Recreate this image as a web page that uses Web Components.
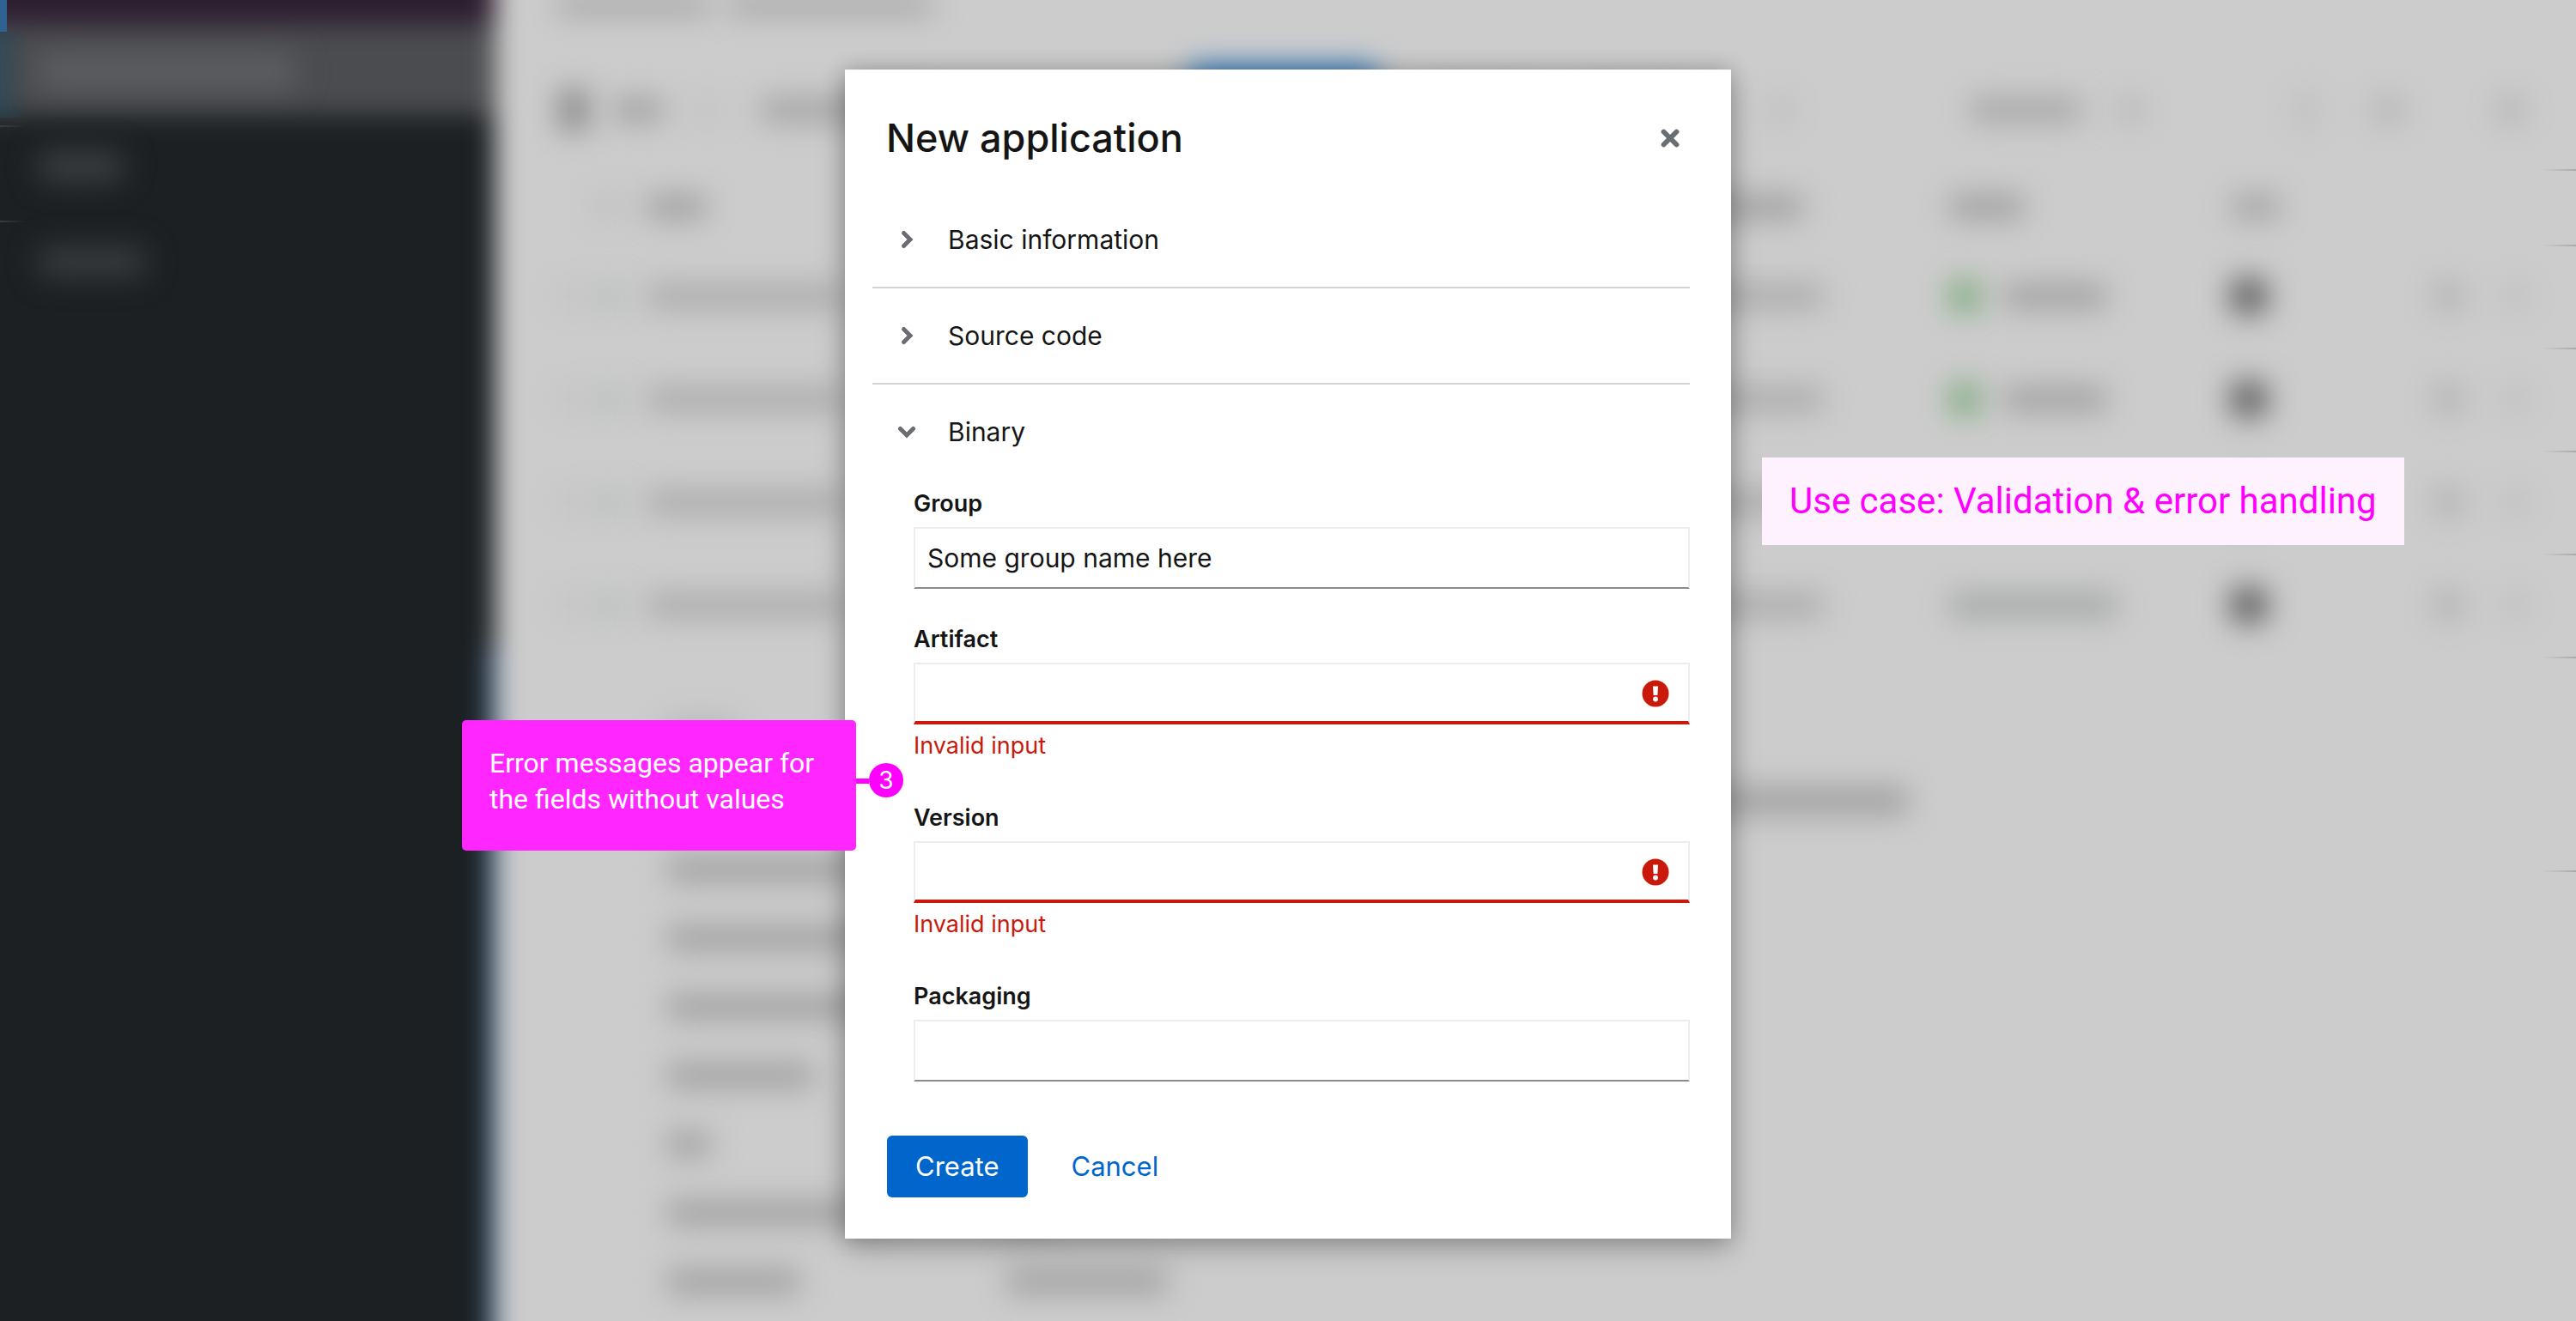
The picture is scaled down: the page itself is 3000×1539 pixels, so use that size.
<!DOCTYPE html>
<html lang="en">
<head>
<meta charset="utf-8">
<title>New application</title>
<style>
  html, body { margin: 0; min-height: 100%; }
  body { background: #ccc; color: #151515; font: 400 30px/48px Inter, "Liberation Sans", sans-serif; }
</style>
</head>
<body>
<app-stage>
  <app-backdrop slot="backdrop"></app-backdrop>
  <app-dialog heading="New application">
    <app-section label="Basic information"></app-section>
    <app-section label="Source code"></app-section>
    <app-section label="Binary" open>
      <app-field label="Group" value="Some group name here"></app-field>
      <app-field label="Artifact" error="Invalid input"></app-field>
      <app-field label="Version" error="Invalid input"></app-field>
      <app-field label="Packaging"></app-field>
    </app-section>
    <app-button slot="actions" variant="primary">Create</app-button>
    <app-button slot="actions" variant="link">Cancel</app-button>
    <app-callout slot="notes" number="3">Error messages appear for the fields without values</app-callout>
    <app-tag slot="notes">Use case: Validation &amp; error handling</app-tag>
  </app-dialog>
</app-stage>

<script>
const define = (name, render) => customElements.define(name, class extends HTMLElement {
  connectedCallback() {
    if (this.shadowRoot) return;
    this.attachShadow({ mode: 'open' }).innerHTML = render(this);
  }
});

define('app-stage', () => `
  <style>
    :host { display: grid; min-height: 100vh; overflow: hidden; }
    .layer { grid-area: 1 / 1; min-width: 0; }
    .back { height: 100vh; overflow: hidden; display: grid; }
    .front { display: flex; justify-content: center; align-items: flex-start; padding-top: 81px; z-index: 1; }
  </style>
  <div class="layer back"><slot name="backdrop"></slot></div>
  <div class="layer front"><slot></slot></div>`);

/* Out-of-focus page behind the dialog: w = width, c = colour, h = height of each shape */
const blob = (w, c = '#9f9f9f', h = 28) => `<i style="width:${w}px;height:${h}px;background:${c}"></i>`;
const row = (state, text) => `
  <div class="row">
    <span>${blob(16, '#bdbdbd')}${blob(30, '#b6baba')}</span><span>${blob(230, '#aaa')}</span><span>${blob(140, '#aaa')}</span>
    <span>${state}${text}</span><span>${blob(42, '#5c5c5c', 40)}</span>
    <span>${blob(32, '#b0b0b0', 34)}</span><span>${blob(20, '#bababa', 30)}</span>
  </div>`;
const okState = blob(36, '#7fab7f', 38), running = blob(122, '#a0a0a0');

define('app-backdrop', () => `
  <style>
    :host { display: flex; min-width: 0; overflow: hidden; background: #ccc; }
    i { display: block; flex: none; border-radius: 8px; filter: blur(17px); }
    nav { flex: none; width: 577px; display: grid; z-index: 1; }
    .tone, .items { grid-area: 1 / 1; }
    .tone { margin: -60px 0 -60px -60px; filter: blur(15px); background: #1c2023; display: flex; flex-direction: column; }
    .tone b { display: block; height: 88px; background: #2c1e30; }
    .tone u { display: block; height: 106px; background: #4b4c4f; }
    .tone s { display: block; flex: 1; margin-top: 620px; border-right: 8px solid #2b5a94; }
    .items { z-index: 1; background: linear-gradient(#2f6192, #2f6192) 0 0 / 8px 37px no-repeat; padding-top: 37px; }
    .item { height: 111px; box-sizing: border-box; display: flex; align-items: center; padding: 0 0 20px 45px;
      background: linear-gradient(90deg, #3a3e41, #3a3e4100) 0 100% / 30px 2px no-repeat; }
    .item:last-child { background: none; }
    .item.on { background: linear-gradient(90deg, #23485c88, #23485c00) 0 0 / 36px 100px no-repeat, linear-gradient(90deg, #3a3e41, #3a3e4100) 0 100% / 30px 2px no-repeat; }
    main { flex: 1; min-width: 0; }
    .head { height: 57px; display: flex; padding-left: 70px; gap: 20px; }
    .row, .bar, .side { box-sizing: border-box; background: linear-gradient(270deg, #aaa, #aaa0) 100% 100% / 40px 2px no-repeat; }
    .bar { height: 142px; display: flex; align-items: center; padding: 0 60px 0 74px; }
    .gap { flex: 1; }
    .row { height: 120px; display: grid; align-items: center; padding: 0 0 4px 74px;
      grid-template-columns: 102fr 1232fr 286fr 328fr 237fr 85fr 80fr; }
    .row.th { height: 88px; }
    .row span { display: flex; align-items: center; gap: 26px; }
    .detail { display: grid; grid-template-columns: 1400fr 1023fr; align-items: start; }
    dl { margin: 0; padding: 46px 0 0 199px; display: grid; grid-template-columns: 395px 1fr; grid-auto-rows: 80px; align-items: center; }
    dd { margin: 0; }
    .side { height: 249px; display: flex; align-items: center; padding-top: 82px; }
  </style>
  <nav aria-hidden="true">
    <div class="tone"><b></b><u></u><s></s></div>
    <div class="items">
      <div class="item on">${blob(300, '#5d5f62', 40)}</div>
      <div class="item">${blob(98, '#3e4043', 34)}</div>
      <div class="item">${blob(124, '#3b3d40', 34)}</div>
    </div>
  </nav>
  <main aria-hidden="true">
    <div class="head">${blob(180, '#909090', 14)}${blob(240, '#909090', 14)}</div>
    <div class="bar">
      ${blob(34, '#888', 50)}<div style="width:28px"></div>${blob(60, '#a0a0a0')}<div style="width:44px"></div>${blob(14, '#b5b5b5')}
      <div style="width:54px"></div>${blob(200, '#a3a3a3')}<div style="width:300px"></div>${blob(218, '#2f7ec4', 104)}
      <div style="width:60px"></div>${blob(120, '#bbb')}<div style="width:60px"></div>${blob(120, '#bbb')}
      <div class="gap"></div>${blob(20, '#b8b8b8', 30)}<div style="width:210px"></div>${blob(130, '#a6a6a6')}
      <div style="width:44px"></div>${blob(26, '#b3b3b3')}<div style="width:180px"></div>${blob(22, '#bcbcbc', 40)}
      <div style="width:68px"></div>${blob(34, '#b3b3b3', 30)}<div style="width:110px"></div>${blob(32, '#b3b3b3', 30)}
    </div>
    <div class="row th"><span><div style="width:18px"></div>${blob(24, '#bbb')}</span><span>${blob(70)}</span><span>${blob(116)}</span><span>${blob(88)}</span><span>${blob(58, '#a4a4a4')}</span></div>
    ${row(okState, running)}${row(okState, running)}${row(okState, running)}${row(blob(196, '#a4a6a6'), '')}
    <div class="detail">
      <dl>
        <dt>${blob(80, '#b4b4b4')}</dt><dd></dd>
        <dt>${blob(180)}</dt><dd></dd>
        <dt>${blob(260)}</dt><dd></dd>
        <dt>${blob(250)}</dt><dd></dd>
        <dt>${blob(270)}</dt><dd></dd>
        <dt>${blob(172)}</dt><dd></dd>
        <dt>${blob(52)}</dt><dd></dd>
        <dt>${blob(260)}</dt><dd>${blob(60)}</dd>
        <dt>${blob(156)}</dt><dd>${blob(190)}</dd>
      </dl>
      <div class="side">${blob(246, '#a0a0a0', 32)}</div>
    </div>
  </main>`);

define('app-dialog', el => `
  <style>
    :host { display: block; position: relative; width: 1032px; max-width: 100%; }
    section { background: #fff; padding: 48px; box-shadow: 0 12px 32px rgba(0,0,0,.22), 0 0 24px rgba(0,0,0,.2); }
    header { display: flex; align-items: center; justify-content: space-between; padding: 0 11px 0 0; margin-bottom: 31px; }
    h1 { margin: 0; font-size: 45px; line-height: 64px; font-weight: 500; }
    .close { all: unset; display: grid; cursor: pointer; }
    .body { margin-left: -16px; }
    footer { display: flex; gap: 18px; margin-top: 63px; padding-left: 1px; }
  </style>
  <section role="dialog" aria-labelledby="t">
    <header><h1 id="t">${el.getAttribute('heading')}</h1>
      <button class="close" aria-label="Close"><svg width="24" height="24" viewBox="0 0 24 24"><path d="M4.500 4.500 19.500 19.500M19.500 4.500 4.500 19.500" stroke="#6a6e73" stroke-width="5.800" stroke-linecap="round"/></svg></button>
    </header>
    <div class="body"><slot></slot></div>
    <footer><slot name="actions"></slot></footer>
  </section>
  <slot name="notes"></slot>`);

define('app-section', el => {
  const open = el.hasAttribute('open');
  return `
  <style>
    :host { display: block; }
    button { all: unset; box-sizing: border-box; display: flex; align-items: center; width: 100%; height: 112px; padding-left: 27px; cursor: pointer; border-bottom: 2px solid #d2d2d2; }
    :host([open]) button { border-color: transparent; }
    svg { flex: none; margin-right: 35px; }
    .content { display: flex; flex-direction: column; gap: 38px; padding: 6px 0 0 48px; }
  </style>
  <button aria-expanded="${open}">
    <svg width="26" height="26" viewBox="0 0 26 26" fill="none" stroke="#6a6e73" stroke-width="5" stroke-linecap="round" stroke-linejoin="miter"><path d="${open ? 'M5.500 9.500 13 17 20.500 9.500' : 'M9.500 5.500 17 13 9.500 20.500'}"/></svg>
    ${el.getAttribute('label')}
  </button>
  ${open ? '<div class="content"><slot></slot></div>' : ''}`;
});

define('app-field', el => {
  const error = el.getAttribute('error');
  return `
  <style>
    :host { display: block; }
    label { display: block; font-size: 27px; line-height: 42px; font-weight: 600; margin-bottom: 6px; }
    .box { display: grid; align-items: center; }
    input, svg { grid-area: 1 / 1; }
    input { box-sizing: border-box; width: 100%; height: 72px; margin: 0; padding: 0 14px; border: 2px solid #ededed; border-bottom-color: #8a8d90; border-radius: 0; outline: 0; background: #fff; color: inherit; font: inherit; }
    input[aria-invalid] { border-bottom: 4px solid #c9190b; padding-right: 72px; }
    svg { justify-self: end; margin-right: 24px; }
    p { margin: 0; padding: 4px 0; font-size: 27px; line-height: 42px; color: #c9190b; }
  </style>
  <label for="f">${el.getAttribute('label')}</label>
  <div class="box">
    <input id="f" type="text" value="${el.getAttribute('value') || ''}"${error ? ' aria-invalid="true" aria-describedby="e"' : ''}>
    ${error ? '<svg width="32" height="32" viewBox="0 0 32 32"><circle cx="16" cy="16" r="15.500" fill="#c9190b"/><path d="M13 7.500h6l-.6 10.500h-4.800z" fill="#fff"/><circle cx="16" cy="22.500" r="2.900" fill="#fff"/></svg>' : ''}
  </div>
  ${error ? `<p id="e">${error}</p>` : ''}`;
});

define('app-button', () => `
  <style>
    :host { display: block; font-size: 31px; }
    button { height: 72px; padding: 0 33px; border: 0; border-radius: 6px; background: #06c; color: #fff; font: inherit; cursor: pointer; }
    :host([variant=link]) button { background: none; color: #06c; }
  </style>
  <button type="button"><slot></slot></button>`);

define('app-callout', el => `
  <style>
    :host { position: absolute; top: 758px; right: calc(100% - 68px); display: flex; align-items: flex-start; color: #fff; font-family: Roboto, sans-serif; }
    .note { box-sizing: border-box; width: 459px; height: 152px; padding: 29px 32px; border-radius: 5px; background: #ff26ff; font-size: 32px; line-height: 42px; }
    .line { width: 15px; height: 6px; margin-top: 68px; background: #f0f; }
    .num { width: 40px; height: 40px; margin-top: 50px; border-radius: 50%; background: #f0f; font: 400 28px/40px Inter, sans-serif; text-align: center; }
  </style>
  <div class="note"><slot></slot></div><div class="line"></div><div class="num">${el.getAttribute('number')}</div>`);

define('app-tag', () => `
  <style>
    :host { position: absolute; top: 452px; left: calc(100% + 36px); box-sizing: border-box; width: 748px; height: 102px; padding: 0 32px; white-space: nowrap; background: #fff2ff; color: #f0f; font: 400 42px/102px Roboto, sans-serif; }
  </style>
  <slot></slot>`);
</script>
</body>
</html>
